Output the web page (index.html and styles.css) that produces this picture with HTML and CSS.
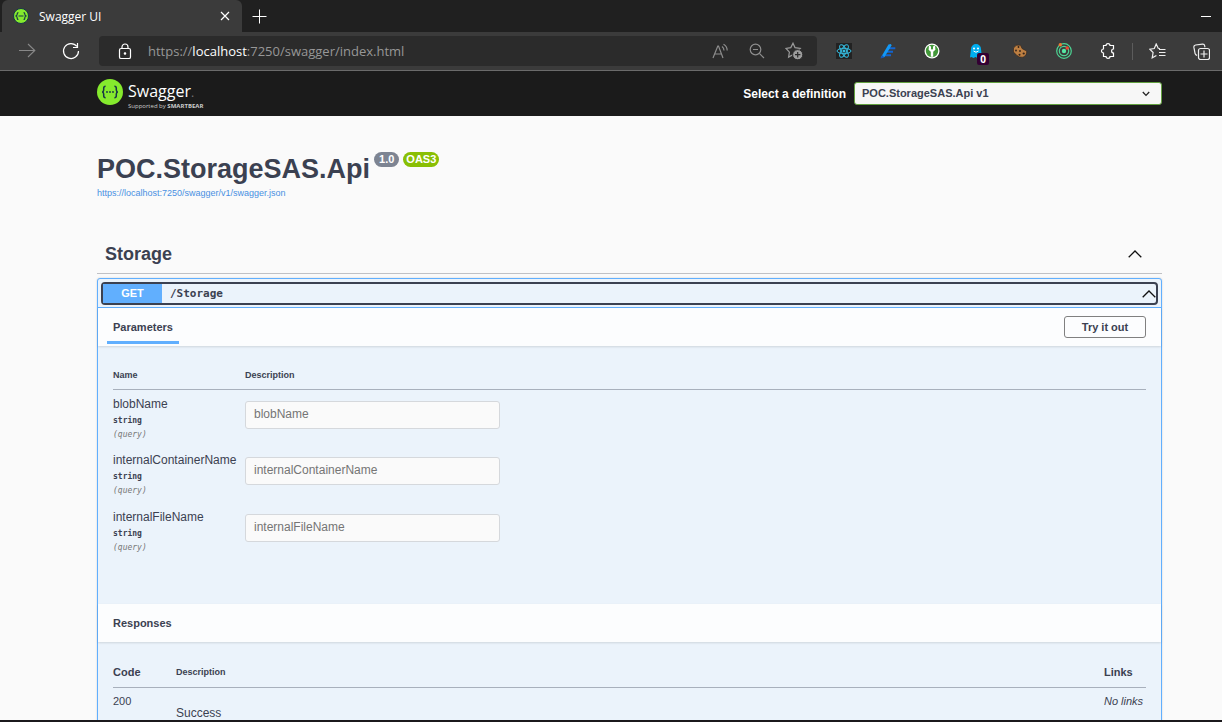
FILE: index.html
```html
<!DOCTYPE html>
<html lang="en">
<head>
<meta charset="utf-8">
<title>Swagger UI</title>
<link rel="stylesheet" href="styles.css">
</head>
<body>
<div class="window">
  <header class="tabstrip">
    <div class="tab">
      <svg class="tab-logo" width="16" height="16" viewBox="0 0 16 16"><circle cx="8" cy="8" r="7.5" fill="#85ea2d" stroke="#173647"/><path d="M5.4 4.6q-1.2 0-1.2 1.4T3 8q1.2.5 1.2 2t1.2 1.4M10.6 4.6q1.2 0 1.2 1.4T13 8q-1.2.5-1.2 2t-1.2 1.4M5.5 8h5" fill="none" stroke="#173647" stroke-width="1.2"/></svg>
      <span class="tab-title">Swagger UI</span>
      <button class="icon-button" aria-label="Close tab"><svg width="10" height="10" viewBox="0 0 10 10"><path d="M1 1l8 8M9 1L1 9" stroke="#fff" stroke-width="1.2"/></svg></button>
    </div>
    <button class="icon-button new-tab" aria-label="New tab"><svg width="15" height="15" viewBox="0 0 15 15"><path d="M7.5.5v14M.5 7.5h14" stroke="#fff"/></svg></button>
    <button class="icon-button minimize" aria-label="Minimize"><svg width="10" height="10" viewBox="0 0 10 10"><path d="M0 5.5h10" stroke="#fff"/></svg></button>
  </header>
  <nav class="toolbar">
    <button class="icon-button" aria-label="Forward"><svg width="18" height="18" viewBox="0 0 18 18" fill="none" stroke="#888" stroke-width="1.1"><path d="M1 8.5h16M10 2l6.8 6.5L10 15"/></svg></button>
    <button class="icon-button" aria-label="Refresh"><svg width="18" height="18" viewBox="0 0 18 18" fill="none" stroke="#fff" stroke-width="1.2"><path d="M16.5 9A7.5 7.5 0 1 1 14.9 4.4M15.500 1v4.5H11"/></svg></button>
    <div class="address">
      <svg width="14" height="17" viewBox="0 0 14 17" fill="none" stroke="#fff" stroke-width="1.2"><rect x="1.5" y="5.5" width="11" height="10" rx="1.6"/><path d="M4 5.500V4a3 3 0 0 1 6 0v1.5"/><circle cx="7" cy="10.5" r=".7" fill="#fff"/></svg>
      <span class="url">https://<b>localhost</b>:7250/swagger/index.html</span>
      <div class="address-actions">
        <button class="icon-button" aria-label="Read aloud"><svg width="17" height="17" viewBox="0 0 17 17" fill="none" stroke="#8d8d8d" stroke-width="1.2"><path d="M1 15L5.8 3h.7L11 15M2.800 11h6.6M10 3.500q2 1.400 2 4M11.500 1.200q3.600 2 3.700 6.200"/></svg></button>
        <button class="icon-button" aria-label="Zoom"><svg width="16" height="16" viewBox="0 0 16 16" fill="none" stroke="#8d8d8d" stroke-width="1.2"><circle cx="6.5" cy="6.5" r="5.3"/><path d="M4 6.500h5M10.400 10.400L15 15"/></svg></button>
        <button class="icon-button" aria-label="Add to favorites"><svg width="18" height="18" viewBox="0 0 18 18"><path d="M8 1.200l2 4.400 5.200.7-3.800 3.500.8 5.300L8 12.700l-4.400 2.400.8-5L1 6.400l4.800-.8z" fill="none" stroke="#9a9a9a" stroke-width="1.2"/><circle cx="12.7" cy="12.7" r="5.1" fill="#9d9d9d" stroke="#2b2b2b"/><path d="M12.700 10v5.400M10 12.700h5.400" stroke="#2b2b2b" stroke-width="1.2"/></svg></button>
      </div>
    </div>
    <div class="extensions">
      <button class="icon-button" aria-label="React tools"><svg width="16" height="16" viewBox="0 0 16 16"><path d="M0 0h16v16H0z" fill="#222"/><g fill="none" stroke="#35bce0"><ellipse cx="8" cy="8" rx="7" ry="2.7"/><ellipse cx="8" cy="8" rx="7" ry="2.7" transform="rotate(60 8 8)"/><ellipse cx="8" cy="8" rx="7" ry="2.7" transform="rotate(120 8 8)"/></g><circle cx="8" cy="8" r="1.5" fill="#35bce0"/></svg></button>
      <button class="icon-button" aria-label="Blue extension"><svg width="16" height="16" viewBox="0 0 16 16"><path d="M8 4.200h7.300v2H7zM7 7.700h6v2H6zM5 11.200h6v2H4z" fill="#1264d0"/><path d="M8.500 1.500l2.500-.5.500 1.500L4.500 14l-3.800.8z" fill="#1298f6"/><path d="M2 12L.5 15.500l4-1z" fill="#1556b8"/></svg></button>
      <button class="icon-button" aria-label="Key extension"><svg width="16" height="16" viewBox="0 0 16 16"><circle cx="8" cy="8" r="7.5" fill="#fff"/><circle cx="8" cy="8" r="6.2" fill="#43983a"/><path d="M5 2.500l2 1V6l1 .8L9 6V3.500l2-1 .4 4.300-2.200 2v5H6.800v-5l-2.200-2z" fill="#fff"/></svg></button>
      <button class="icon-button ghost" aria-label="Ghost extension"><svg width="16" height="16" viewBox="0 0 16 16"><path d="M2 14.500L3 6a5 5 0 0 1 10 0l1 9-2.500-1-2 1-2-1-2 1-2-1z" fill="#00aef0"/><circle cx="6" cy="5.5" r="1" fill="#fff"/><circle cx="10" cy="5.5" r="1" fill="#fff"/><path d="M5.500 8q2.500 2.500 5 0" stroke="#fff" fill="none"/></svg><span class="badge">0</span></button>
      <button class="icon-button" aria-label="Cookie extension"><svg width="16" height="16" viewBox="0 0 16 16"><path d="M1.500 5Q4 .8 8.500 2.300L10 5.500l2 1.200L14.700 8Q15 12.500 11 14.200q-4.500.5-6-1.700L1.500 9z" fill="#bd7f42" stroke="#33231a" stroke-width=".6"/><g fill="#33231a"><circle cx="6.5" cy="4" r=".9"/><circle cx="4" cy="7.500" r=".9"/><circle cx="8" cy="8" r=".9"/><circle cx="7.500" cy="11.800" r="1"/><circle cx="11.700" cy="10.500" r="1.100"/></g></svg></button>
      <button class="icon-button" aria-label="Radar extension"><svg width="16" height="16" viewBox="0 0 16 16"><g fill="none" stroke="#4dd493" stroke-width="1.2"><circle cx="8" cy="8" r="7.3"/><circle cx="8" cy="8" r="4.7"/></g><circle cx="8" cy="8" r="2.2" fill="#56e6a2"/><circle cx="4.3" cy="1.8" r="1.7" fill="#f07832"/><circle cx="11.2" cy="5" r="1.7" fill="#f0462e"/></svg></button>
      <button class="icon-button" aria-label="Extensions"><svg width="16" height="16" viewBox="0 0 16 16" fill="none" stroke="#fff" stroke-width="1.2"><path d="M3.500 2.500H6a2 1.900 0 0 1 4 0h3.500V6a1.800 1.900 0 1 0 0 4v3.500H10a2 1.900 0 0 1-4 0H3.500V10a2 2 0 1 1 0-4z"/></svg></button>
    </div>
    <div class="browser-menu">
      <button class="icon-button" aria-label="Favorites"><svg width="17" height="17" viewBox="0 0 17 17" fill="none" stroke="#eee" stroke-width="1.2"><path d="M11 5.500L9.200 5.300 7.200 1 5.300 5.500.8 6.200l3.300 3.300-.9 5.300 4.200-2.400M10 6.500h6.500M10 9.500h6.500M10 12.500h6.500"/></svg></button>
      <button class="icon-button" aria-label="Collections"><svg width="17" height="17" viewBox="0 0 17 17" fill="none" stroke="#eee" stroke-width="1.2"><path d="M11.800 4.300V3Q11.400.9 9.500 1.100L2.600 2Q.6 2.400.9 4.400l1.200 6.200q.4 1.500 2 1.700"/><rect x="5.5" y="5.5" width="11" height="11" rx="2"/><path d="M11 7.500v7M7.500 11h7"/></svg></button>
    </div>
  </nav>
  <div class="topbar">
    <a class="brand" href="#top" aria-label="Swagger">
      <svg width="26" height="26" viewBox="0 0 26 26"><circle cx="13" cy="13" r="13" fill="#85ea2d"/><path d="M8.600 7.300q-1.900 0-1.900 2v1.800q0 1.700-1.500 1.900 1.500.3 1.500 2v1.800q0 2 1.900 2M17.400 7.300q1.900 0 1.900 2v1.800q0 1.700 1.500 1.900-1.500.3-1.500 2v1.800q0 2-1.900 2" fill="none" stroke="#173647" stroke-width="1.5"/><g fill="#173647"><circle cx="10" cy="13" r=".9"/><circle cx="13" cy="13" r=".9"/><circle cx="16" cy="13" r=".9"/></g></svg>
      <span class="brand-text"><span class="brand-name">Swagger<small>.</small></span><span class="brand-support">Supported by <b>SMARTBEAR</b></span></span>
    </a>
    <label class="definition-label" for="definition">Select a definition</label>
    <span class="definition"><select id="definition"><option>POC.StorageSAS.Api v1</option></select><svg width="8" height="6" viewBox="0 0 8 6"><path d="M.8 1L4 4.400 7.200 1" fill="none" stroke="#222" stroke-width="1.3"/></svg></span>
  </div>
  <main class="page" id="top">
    <div class="info">
      <h1>POC.StorageSAS.Api</h1><span class="pill">1.0</span><span class="pill oas">OAS3</span>
    </div>
    <a class="spec-link" href="#top">https://localhost:7250/swagger/v1/swagger.json</a>
    <section>
      <div class="tag">
        <h2>Storage</h2>
        <button class="icon-button" aria-label="Collapse Storage"><svg width="14" height="8" viewBox="0 0 14 8"><path d="M.7 7.300L7 1l6.300 6.300" fill="none" stroke="#111" stroke-width="1.3"/></svg></button>
      </div>
      <article class="operation">
        <div class="summary">
          <button class="summary-button"><span class="method">GET</span><span class="path">/Storage</span><svg width="14" height="8" viewBox="0 0 14 8"><path d="M.7 7.300L7 1l6.300 6.300" fill="none" stroke="#111" stroke-width="1.3"/></svg></button>
        </div>
        <div class="section-header"><h3 class="active">Parameters</h3><button class="try">Try it out</button></div>
        <div class="section-body parameters-body">
          <table class="parameters">
            <thead><tr><th class="name-col">Name</th><th>Description</th></tr></thead>
            <tbody>
              <tr><td><label for="blob">blobName</label><div class="type">string</div><div class="in">(query)</div></td><td><input id="blob" placeholder="blobName"></td></tr>
              <tr><td><label for="container">internalContainerName</label><div class="type">string</div><div class="in">(query)</div></td><td><input id="container" placeholder="internalContainerName"></td></tr>
              <tr><td><label for="file">internalFileName</label><div class="type">string</div><div class="in">(query)</div></td><td><input id="file" placeholder="internalFileName"></td></tr>
            </tbody>
          </table>
        </div>
        <div class="section-header"><h3>Responses</h3></div>
        <div class="section-body responses-body">
          <table class="responses">
            <thead><tr><th class="code-col">Code</th><th class="small">Description</th><th class="links-col">Links</th></tr></thead>
            <tbody><tr><td>200</td><td class="result">Success</td><td><i>No links</i></td></tr></tbody>
          </table>
        </div>
      </article>
    </section>
  </main>
</div>
</body>
</html>
```

FILE: styles.css
```css
* { box-sizing: border-box; }
body { margin: 0; font-family: "Liberation Sans", Arial, sans-serif; color: #3b4151; background: #fafafa; }
button, input, select { font: inherit; color: inherit; margin: 0; }
h1, h2, h3 { margin: 0; }
svg { display: block; flex: none; }
.window { height: 100vh; display: flex; flex-direction: column; overflow: hidden; border-bottom: 2px solid #1b191c; }
.icon-button { display: flex; padding: 0; border: 0; background: none; }

.tabstrip { flex: none; height: 32px; display: flex; align-items: center; padding: 0 11px 0 2px; background: #202020; }
.tab { width: 240px; height: 32px; display: flex; align-items: center; padding: 0 12px 0 11px; gap: 10px; background: #3b3b3b; color: #fff; border-radius: 6px 6px 0 0; font: 12px "Open Sans", "Noto Sans", sans-serif; }
.tab-title { flex: 1; }
.new-tab { margin-left: 10px; }
.minimize { margin-left: auto; }

.toolbar { flex: none; height: 39px; display: flex; align-items: center; padding: 0 12px 0 18px; background: #3b3b3b; border-bottom: 1px solid #6b6b6b; }
.toolbar > .icon-button { margin-right: 26px; }
.toolbar > .icon-button + .icon-button { margin-right: 19px; }
.address { flex: 1; height: 30px; display: flex; align-items: center; padding: 0 14px 0 19px; background: #2b2b2b; border-radius: 4px; }
.url { margin-left: 16px; color: #979797; font: 13px "Open Sans", "Noto Sans", sans-serif; }
.url b { color: #fff; font-weight: 400; }
.address-actions { display: flex; align-items: center; gap: 20px; margin-left: auto; }
.extensions { display: flex; gap: 28px; margin-left: 19px; padding-right: 16px; }
.ghost { position: relative; }
.badge { position: absolute; left: 9px; top: 10px; width: 12px; height: 12px; background: #330033; border-radius: 2px; color: #fff; font: bold 10px/12px "Open Sans", sans-serif; text-align: center; }
.browser-menu { display: flex; gap: 27px; padding-left: 16px; border-left: 1px solid #5c5c5c; }

.topbar { flex: none; height: 45px; display: flex; align-items: center; padding: 0 60px 0 97px; background: #1b1b1b; color: #fff; }
.brand { display: flex; gap: 5px; margin-right: auto; padding-bottom: 4px; color: #fff; text-decoration: none; font-family: "Open Sans", sans-serif; }
.brand-text { display: flex; flex-direction: column; height: 26px; padding-top: 3px; }
.brand-name { font-size: 16px; line-height: 18px; }
.brand-name small { color: #777; font-size: 12px; }
.brand-support { font-size: 6px; line-height: 8px; color: #ccc; white-space: nowrap; }
.definition-label { font-size: 12px; font-weight: bold; margin-right: 8px; }
.definition { width: 308px; display: grid; align-items: center; }
.definition select { grid-area: 1 / 1; width: 100%; height: 23px; padding: 0 7px 1px; border: 1px solid #62a03f; border-radius: 3px; background: #f7f7f7; color: #3b4151; font-size: 11px; font-weight: bold; appearance: none; }
.definition svg { grid-area: 1 / 1; justify-self: end; margin-right: 12px; pointer-events: none; }

.page { flex: 1; min-height: 0; overflow: hidden; padding: 36px 60px 0 97px; }
.info { display: flex; align-items: flex-start; gap: 4px; height: 37px; }
h1 { font-size: 27px; line-height: 34px; }
.pill { padding: 0 5px; border-radius: 8px; background: #7d8492; color: #fff; font-size: 11px; font-weight: bold; line-height: 15px; }
.oas { padding: 0 3px; background: #89bf04; }
.spec-link { display: block; font-size: 9px; line-height: 8px; color: #4990e2; text-decoration: none; }
.tag { display: flex; align-items: center; justify-content: space-between; height: 39px; margin-top: 38px; padding: 0 20px 0 8px; border-bottom: 1px solid #c0c1c5; }
.tag h2 { font-size: 18px; }
.operation { margin-top: 4px; border: 1px solid #61affe; border-radius: 3px; background: #ebf3fb; box-shadow: 0 0 2px rgba(0, 0, 0, .19); }
.summary { padding: 3px 3px 2px; border-bottom: 1px solid #61affe; }
.summary-button { width: 100%; height: 23px; display: flex; align-items: center; padding: 0; border: 2px solid #3b4151; border-radius: 4px; background: #ebf3fb; text-align: left; }
.method { width: 59px; background: #61affe; color: #fff; font-size: 11px; font-weight: bold; line-height: 19px; text-align: center; }
.path { flex: 1; padding-left: 8px; font: bold 11px "DejaVu Sans Mono", monospace; }
.section-header { height: 38px; display: flex; align-items: center; justify-content: space-between; padding: 0 15px; background: #fcfdfe; box-shadow: 0 1px 2px rgba(0, 0, 0, .12); }
.section-header h3 { font-size: 11px; line-height: 13px; }
.section-header .active { align-self: stretch; margin: 0 -6px 2px; padding: 13px 6px 0; border-bottom: 3px solid #61affe; }
.try { width: 82px; height: 22px; padding: 0; border: 1px solid #808080; border-radius: 3px; background: none; font-size: 11px; font-weight: bold; }
.section-body { padding: 15px 15px 0; }
.parameters-body { padding-bottom: 44px; }
.responses-body { padding-bottom: 30px; }
table { width: 100%; border-collapse: collapse; font-size: 12px; text-align: left; }
th { height: 28px; padding: 0; border-bottom: 1px solid #a8b0bc; }
td { padding: 0; vertical-align: top; }
.parameters th { font-size: 9px; }
.name-col { width: 132px; }
.parameters td { height: 57px; padding-top: 7px; line-height: 14px; }
.parameters td + td { padding-top: 11px; }
.type { margin-top: 3px; font: bold 8px/13px "DejaVu Sans Mono", monospace; }
.in { font: italic 8px/15px "DejaVu Sans Mono", monospace; color: #777; }
input { display: block; width: 255px; height: 28px; padding: 0 8px 2px; border: 1px solid #d5d8dc; border-radius: 3px; background: #fafafa; }
input::placeholder { color: #757575; opacity: 1; }
.responses th { height: 30px; font-size: 11px; }
.responses th.small { font-size: 9px; }
.code-col { width: 63px; }
.links-col { width: 42px; }
.responses td { padding-top: 7px; font-size: 11px; line-height: 12px; white-space: nowrap; }
.responses .result { padding-top: 19px; font-size: 12px; }
```
